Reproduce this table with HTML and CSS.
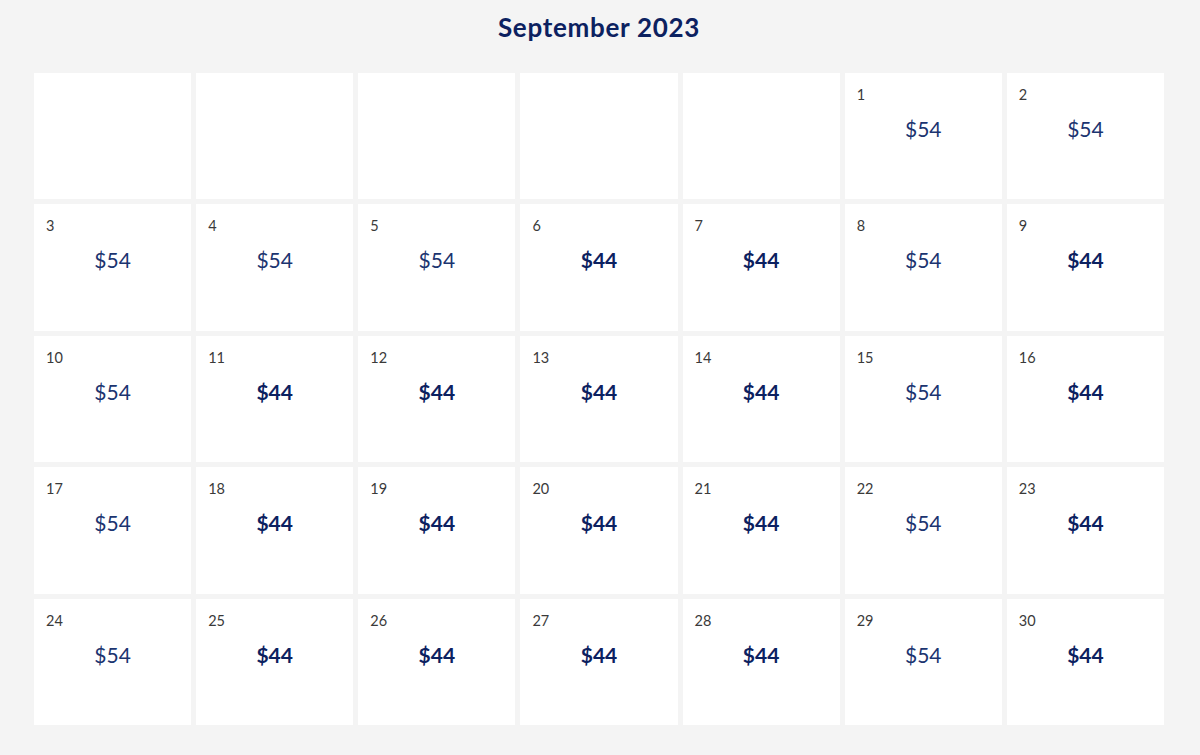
FILE: index.html
```html
<!DOCTYPE html>
<html>
<head>
<meta charset="utf-8">
<link rel="stylesheet" href="styles.css">
</head>
<body>
<div class="page">
  <h1 class="title">September 2023</h1>
  <div class="grid">
    <div class="cell"></div><div class="cell"></div><div class="cell"></div><div class="cell"></div><div class="cell"></div>
    <div class="cell"><span class="day">1</span><span class="price">$54</span></div>
    <div class="cell"><span class="day">2</span><span class="price">$54</span></div>
    <div class="cell"><span class="day">3</span><span class="price">$54</span></div>
    <div class="cell"><span class="day">4</span><span class="price">$54</span></div>
    <div class="cell"><span class="day">5</span><span class="price">$54</span></div>
    <div class="cell"><span class="day">6</span><span class="price low">$44</span></div>
    <div class="cell"><span class="day">7</span><span class="price low">$44</span></div>
    <div class="cell"><span class="day">8</span><span class="price">$54</span></div>
    <div class="cell"><span class="day">9</span><span class="price low">$44</span></div>
    <div class="cell"><span class="day">10</span><span class="price">$54</span></div>
    <div class="cell"><span class="day">11</span><span class="price low">$44</span></div>
    <div class="cell"><span class="day">12</span><span class="price low">$44</span></div>
    <div class="cell"><span class="day">13</span><span class="price low">$44</span></div>
    <div class="cell"><span class="day">14</span><span class="price low">$44</span></div>
    <div class="cell"><span class="day">15</span><span class="price">$54</span></div>
    <div class="cell"><span class="day">16</span><span class="price low">$44</span></div>
    <div class="cell"><span class="day">17</span><span class="price">$54</span></div>
    <div class="cell"><span class="day">18</span><span class="price low">$44</span></div>
    <div class="cell"><span class="day">19</span><span class="price low">$44</span></div>
    <div class="cell"><span class="day">20</span><span class="price low">$44</span></div>
    <div class="cell"><span class="day">21</span><span class="price low">$44</span></div>
    <div class="cell"><span class="day">22</span><span class="price">$54</span></div>
    <div class="cell"><span class="day">23</span><span class="price low">$44</span></div>
    <div class="cell"><span class="day">24</span><span class="price">$54</span></div>
    <div class="cell"><span class="day">25</span><span class="price low">$44</span></div>
    <div class="cell"><span class="day">26</span><span class="price low">$44</span></div>
    <div class="cell"><span class="day">27</span><span class="price low">$44</span></div>
    <div class="cell"><span class="day">28</span><span class="price low">$44</span></div>
    <div class="cell"><span class="day">29</span><span class="price">$54</span></div>
    <div class="cell"><span class="day">30</span><span class="price low">$44</span></div>
  </div>
</div>
</body>
</html>
```
FILE: styles.css
```css
html, body {
  margin: 0;
  padding: 0;
  background: #f4f4f4;
  font-family: "Lato", "Noto Sans", sans-serif;
}
.page {
  width: 1200px;
  height: 755px;
  padding: 0 36px 0 34px;
  box-sizing: border-box;
}
.title {
  margin: 0;
  height: 73px;
  padding-top: 12px;
  box-sizing: border-box;
  text-align: center;
  font-size: 26px;
  letter-spacing: 0.7px;
  line-height: 30px;
  font-weight: 700;
  color: #0c2160;
}
.grid {
  display: grid;
  grid-template-columns: repeat(7, 1fr);
  grid-template-rows: repeat(5, 126.2px);
  gap: 5.3px 5px;
}
.cell {
  background: #ffffff;
  display: flex;
  flex-direction: column;
  padding: 14px 12px 0 12px;
}
.day {
  font-size: 14.5px;
  line-height: 16px;
  color: #3a3a3a;
  height: 16px;
}
.price {
  margin-top: 14px;
  text-align: center;
  font-size: 21px;
  line-height: 24px;
  color: #1b3470;
  font-weight: 400;
}
.price.low {
  font-weight: 700;
  color: #0c2160;
}
```
